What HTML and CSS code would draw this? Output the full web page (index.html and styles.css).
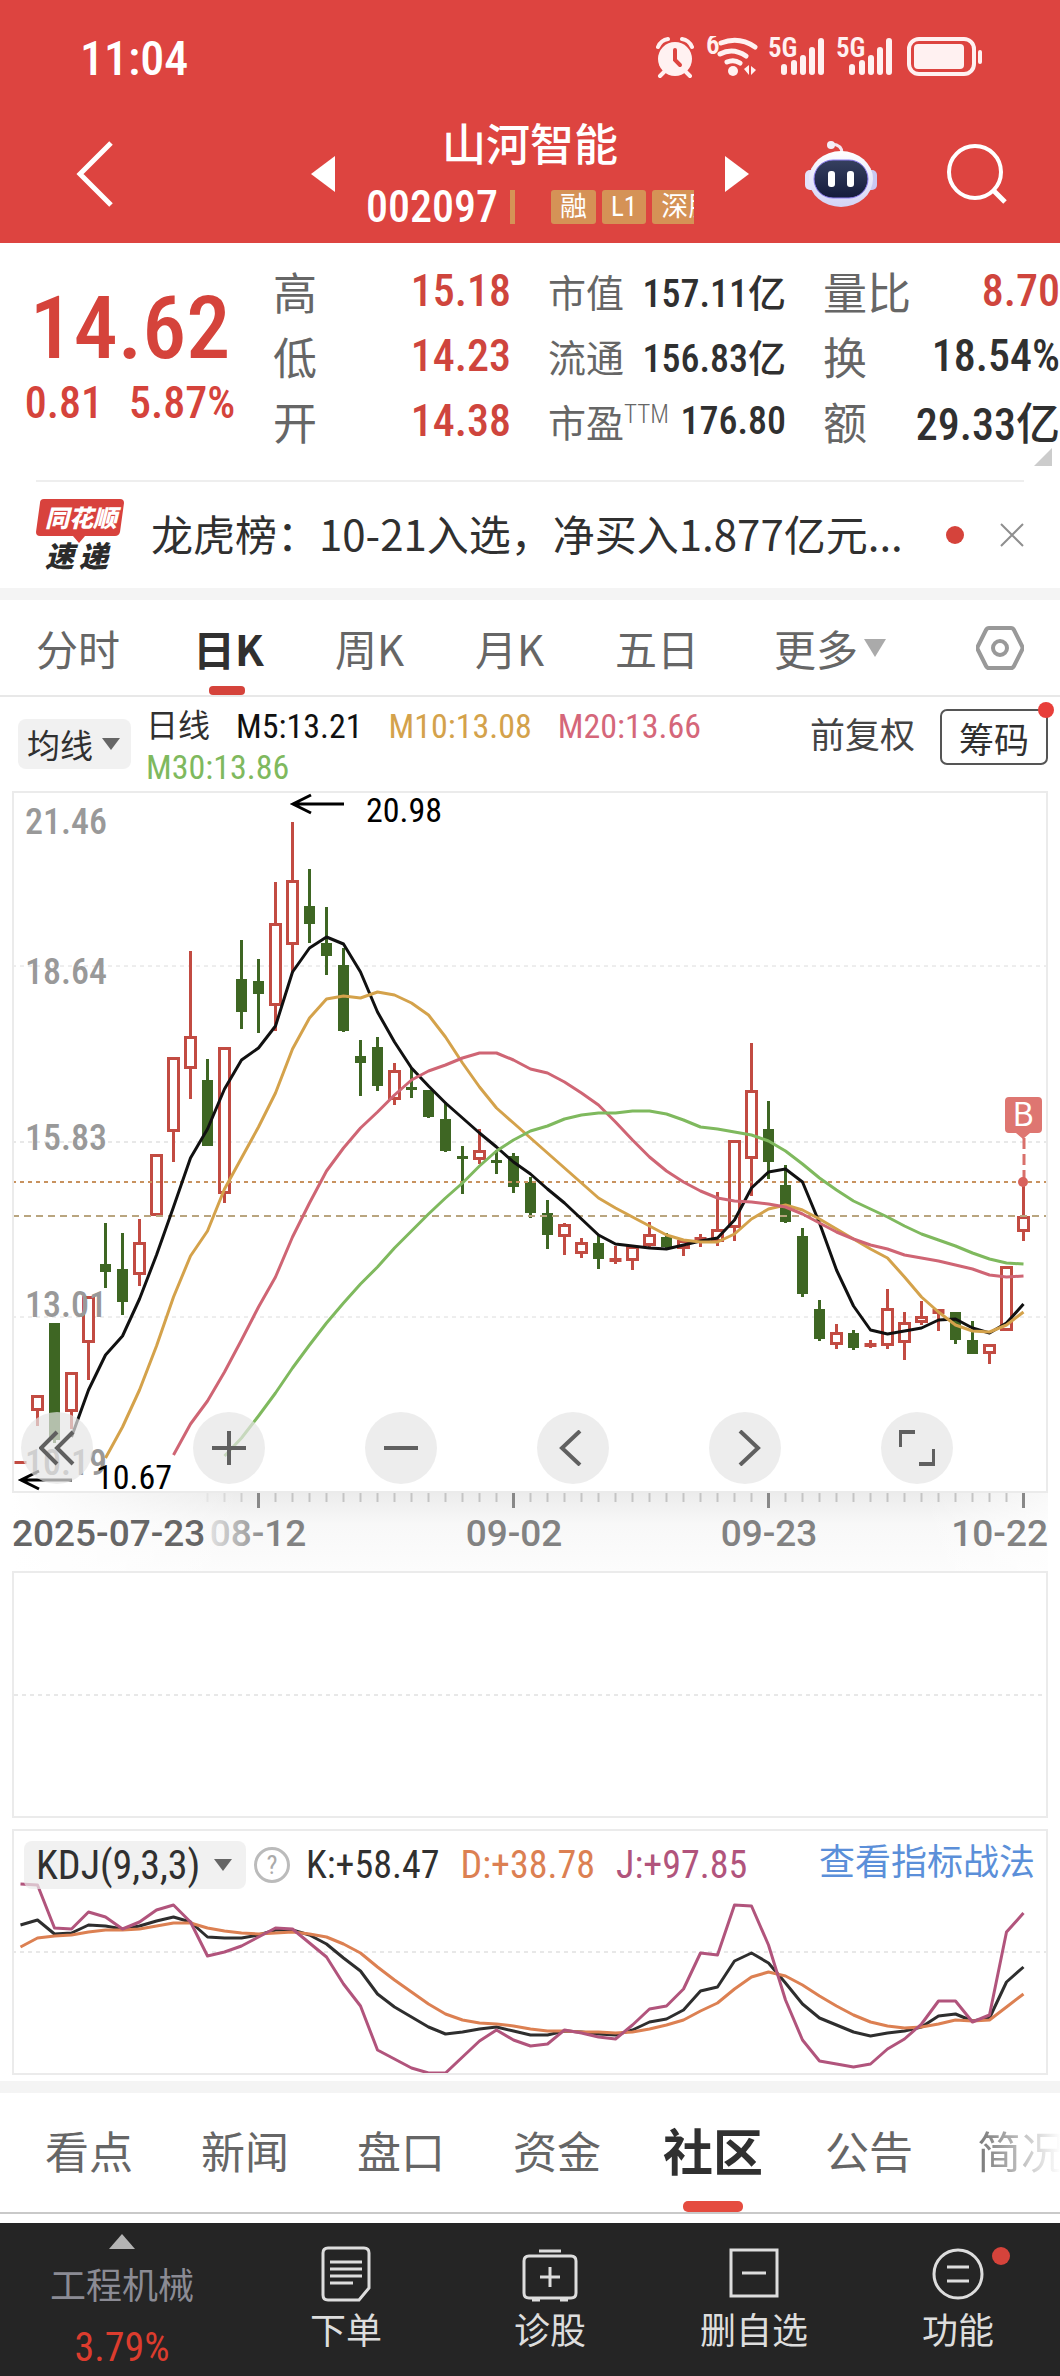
FILE: index.html
```html
<!DOCTYPE html>
<html lang="zh-CN">
<head>
<meta charset="utf-8">
<meta name="viewport" content="width=device-width, initial-scale=1">
<title>山河智能 002097</title>
<link rel="stylesheet" href="styles.css">
</head>
<body>
<header class="top">
  <div class="status">
    <time class="clock">11:04</time>
    <svg class="status-icons" viewBox="0 0 328 44" width="328" height="44" fill="none" stroke="#fff1f1" aria-hidden="true">
      <circle cx="19" cy="23" r="17" fill="#fff1f1" stroke="none"/>
      <path d="M2 11q3-7 10-8M36 11q-3-7-10-8M8 36l-4 4M30 36l4 4" stroke-width="4" stroke-linecap="round"/>
      <path d="M19 14v10l5 5" stroke="#dd4440" stroke-width="4" stroke-linecap="round"/>
      <g stroke-width="5" stroke-linecap="round">
        <path d="M65 7q18-7 34 4M64 18q13-7 26 2M71 26q7-3 13 1"/>
      </g>
      <circle cx="77" cy="35" r="5" fill="#fff1f1" stroke="none"/>
      <path d="M88 33l5-4v10zM95 30v9l5-5z" fill="#fff1f1" stroke="none"/>
      <g stroke-width="6" stroke-linecap="round">
        <path d="M128 31v5M138 27v9M147 22v14M156 14v22M165 5v31"/>
        <path d="M196 31v5M206 27v9M215 22v14M224 14v22M233 5v31"/>
      </g>
      <rect x="253" y="3" width="65" height="35" rx="10" stroke-width="4"/>
      <rect x="258" y="8" width="50" height="25" rx="4" fill="#fff1f1" stroke="none"/>
      <path d="M324 16v10" stroke-width="4" stroke-linecap="round"/>
      <g class="status-text" fill="#fff1f1" stroke="none"><text x="50" y="18">6</text><text x="112" y="21">5G</text><text x="180" y="21">5G</text></g>
    </svg>
  </div>
  <nav class="titlebar" aria-label="个股">
    <button class="icon-btn back" aria-label="返回"><svg viewBox="0 0 40 68" width="40" height="68"><path d="M36 3L5 34l31 31" fill="none" stroke="#fff" stroke-width="5"/></svg></button>
    <button class="icon-btn" aria-label="上一只"><svg viewBox="0 0 24 36" width="24" height="36"><path d="M24 0v36L0 18z" fill="#fff"/></svg></button>
    <div class="stock">
      <h1 class="name">山河智能</h1>
      <div class="code-row"><span class="code">002097</span><i class="bar"></i><span class="tags"><span class="tag">融</span><span class="tag">L1</span><span class="tag">深股通</span></span></div>
    </div>
    <button class="icon-btn" aria-label="下一只"><svg viewBox="0 0 24 36" width="24" height="36"><path d="M0 0v36l24-18z" fill="#fff"/></svg></button>
    <button class="icon-btn robot" aria-label="智能助手">
      <svg viewBox="0 0 72 68" width="72" height="68">
        <defs><linearGradient id="shell" x1="0" y1="0" x2="0" y2="1"><stop offset="0" stop-color="#fff"/><stop offset="1" stop-color="#d3d3f6"/></linearGradient><linearGradient id="visor" x1="0" y1="0" x2="0" y2="1"><stop offset="0" stop-color="#36405f"/><stop offset="1" stop-color="#141b3c"/></linearGradient></defs>
        <path d="M37 13q0-8-10-9" fill="none" stroke="#f4e6f0" stroke-width="3"/><circle cx="26" cy="5" r="4" fill="#f4eef8"/>
        <rect x="0" y="30" width="12" height="20" rx="5" fill="#e4e2fb"/><rect x="60" y="30" width="12" height="20" rx="5" fill="#c9c8f2"/>
        <ellipse cx="36" cy="39" rx="32" ry="28" fill="url(#shell)"/>
        <rect x="9" y="20" width="54" height="38" rx="19" fill="url(#visor)" stroke="#8c7cf0" stroke-width="1"/>
        <rect x="23" y="31" width="7" height="16" rx="3" fill="#fff"/><rect x="42" y="31" width="7" height="16" rx="3" fill="#fff"/>
      </svg>
    </button>
    <button class="icon-btn" aria-label="搜索"><svg viewBox="0 0 62 62" width="62" height="62" fill="none" stroke="#fff" stroke-width="4"><circle cx="29" cy="29" r="26"/><path d="M47 47l12 12" stroke-width="5"/></svg></button>
  </nav>
</header>

<main>
<section class="quote">
  <div class="price"><strong class="last">14.62</strong><div class="change"><span>0.81</span><span>5.87%</span></div></div>
  <dl class="col"><div><dt>高</dt><dd class="up">15.18</dd></div><div><dt>低</dt><dd class="up">14.23</dd></div><div><dt>开</dt><dd class="up">14.38</dd></div></dl>
  <dl class="col small"><div><dt>市值</dt><dd>157.11亿</dd></div><div><dt>流通</dt><dd>156.83亿</dd></div><div><dt>市盈<sup>TTM</sup></dt><dd>176.80</dd></div></dl>
  <dl class="col"><div><dt>量比</dt><dd class="up">8.70</dd></div><div><dt>换</dt><dd>18.54%</dd></div><div><dt>额</dt><dd>29.33亿</dd></div></dl>
  <svg class="corner" viewBox="0 0 18 18" width="18" height="18" aria-hidden="true"><path d="M18 0v18H0z" fill="#ccc"/></svg>
</section>

<section class="news">
  <svg class="news-logo" viewBox="0 0 88 72" width="88" height="72" role="img" aria-label="同花顺速递">
    <path d="M8 0h76q4 0 4 4l-4 29q-1 4-5 4H49l-6 7-6-7H4q-4 0-4-4L4 4q0-4 4-4z" fill="#d8423d"/>
    <text x="9" y="28" fill="#fff" font-size="24">同花顺</text><text x="9" y="68" fill="#2b2b2b" font-size="29">速</text><text x="43" y="68" fill="#2b2b2b" font-size="29">递</text>
  </svg>
  <a class="headline" href="#news">龙虎榜：10-21入选，净买入1.877亿元...</a>
  <i class="dot"></i>
  <button class="icon-btn" aria-label="关闭"><svg viewBox="0 0 24 24" width="24" height="24"><path d="M1 1l22 22M23 1L1 23" stroke="#8f8f8f" stroke-width="2"/></svg></button>
</section>

<nav class="periods" aria-label="周期">
  <button>分时</button><button class="on">日K</button><button>周K</button><button>月K</button><button>五日</button>
  <button class="more">更多<svg viewBox="0 0 22 18" width="22" height="18"><path d="M0 0h22L11 18z" fill="#aaa"/></svg></button>
  <button class="gear" aria-label="设置"><svg viewBox="0 0 48 46" width="48" height="46" fill="none" stroke="#999" stroke-width="4" stroke-linejoin="round"><path d="M13 3h22q2 0 3 2l8 16q1 2 0 4l-8 16q-1 2-3 2H13q-2 0-3-2L2 25q-1-2 0-4l8-16q1-2 3-2z"/><circle cx="24" cy="23" r="7"/></svg></button>
</nav>

<section class="legend">
  <button class="pill">均线<svg viewBox="0 0 18 12" width="18" height="12"><path d="M0 0h18L9 12z" fill="#666"/></svg></button>
  <p class="averages"><span>日线</span><span class="m5">M5:13.21</span><span class="m10">M10:13.08</span><span class="m20">M20:13.66</span><span class="m30">M30:13.86</span></p>
  <button class="plain">前复权</button>
  <button class="chips">筹码<i class="dot"></i></button>
</section>

<section class="panel kline">
  <svg class="plot" id="kline" viewBox="14 793 1032 698" role="img" aria-label="日K线图"></svg>
  <div class="controls">
    <button aria-label="最早"><svg viewBox="0 0 36 36"><path d="M18 2L2 18l16 16M34 2L18 18l16 16"/></svg></button>
    <button aria-label="放大"><svg viewBox="0 0 36 36"><path d="M18 1v34M1 18h34"/></svg></button>
    <button aria-label="缩小"><svg viewBox="0 0 36 36"><path d="M1 18h34"/></svg></button>
    <button aria-label="左移"><svg viewBox="0 0 36 36"><path d="M25 1L7 18l18 17"/></svg></button>
    <button aria-label="右移"><svg viewBox="0 0 36 36"><path d="M13 1l18 17-18 17"/></svg></button>
    <button aria-label="全屏"><svg viewBox="0 0 36 36"><path d="M1 17V2h15M35 19v15H20"/></svg></button>
  </div>
</section>
<div class="axis"><svg id="axis" viewBox="12 1493 1036 78" role="img" aria-label="日期"></svg></div>
<section class="panel volume"></section>
<section class="panel kdj">
  <svg class="plot" id="kdj" viewBox="14 1831 1032 242" role="img" aria-label="KDJ"></svg>
  <div class="kdj-head">
    <button class="pill">KDJ(9,3,3)<svg viewBox="0 0 18 12" width="18" height="12"><path d="M0 0h18L9 12z" fill="#666"/></svg></button>
    <button class="help" aria-label="帮助">?</button>
    <span>K:+58.47</span><span class="d">D:+38.78</span><span class="j">J:+97.85</span>
    <a href="#guide">查看指标战法</a>
  </div>
</section>

<nav class="sections" aria-label="资讯">
  <a href="#kd">看点</a><a href="#xw">新闻</a><a href="#pk">盘口</a><a href="#zj">资金</a><a class="on" href="#sq">社区</a><a href="#gg">公告</a><a class="fade" href="#jk">简况</a>
</nav>
</main>

<nav class="dock" aria-label="操作">
  <button class="sector"><svg viewBox="0 0 26 15" width="26" height="15"><path d="M13 0l13 15H0z" fill="#b4b4b4"/></svg><span>工程机械</span><b>3.79%</b></button>
  <button><svg viewBox="0 0 60 56" width="60" height="56"><path d="M12 2h36q5 0 5 5v35L43 54H12q-5 0-5-5V7q0-5 5-5z"/><path d="M14 16h32M14 23h32M14 30h32M14 37h23"/></svg>下单</button>
  <button><svg viewBox="0 0 60 56" width="60" height="56"><path d="M19 5h22M9 10h42q5 0 5 5v32q0 5-5 5H9q-5 0-5-5V15q0-5 5-5zM30 21v20M20 31h20M12 54h8M40 54h8"/></svg>诊股</button>
  <button><svg viewBox="0 0 60 56" width="60" height="56"><path d="M7 4h46v46H7zM18 27h24"/></svg>删自选</button>
  <button><span class="badge-wrap"><svg viewBox="0 0 60 56" width="60" height="56"><circle cx="30" cy="28" r="24"/><path d="M19 21h22M19 35h22"/></svg><i class="dot"></i></span>功能</button>
</nav>
<script src="chart.js"></script>
</body>
</html>
```
FILE: styles.css
```css
*{box-sizing:border-box}
body{margin:0;background:#fff;color:#303030;font-family:"Roboto Condensed","Noto Sans CJK SC",sans-serif}
h1,p,dl,dd{margin:0}
button{border:0;padding:0;margin:0;background:none;font:inherit;color:inherit;white-space:nowrap}
a{color:inherit;text-decoration:none}
svg{display:block;flex:none}
.dot{display:block;flex:none;width:18px;height:18px;border-radius:50%;background:#d5433b}

.top{height:243px;background:#dd4440;color:#fff}
.status{display:flex;justify-content:space-between;align-items:center;height:116px;padding:0 76px 0 80px}
.clock{font-size:48px;font-weight:500}
.status-text{font-size:27px;font-weight:600}
.titlebar{display:grid;grid-template-columns:311px 24px 1fr 24px 56px 72px 69px 62px 52px;align-items:center;height:108px}
.titlebar>:nth-child(5){grid-column:6}
.titlebar>:nth-child(6){grid-column:8}
.back{padding-left:75px}
.stock{display:flex;flex-direction:column;align-items:center}
.name{font-size:44px;line-height:60px;font-weight:500}
.code-row{display:flex;align-items:center;width:328px;height:56px;padding-top:6px;overflow:hidden}
.code{font-size:44px;font-weight:500}
.bar{width:5px;height:34px;margin:0 36px 0 12px;background:#d59256}
.tags{display:flex;gap:6px;flex:1;overflow:hidden}
.tag{flex:none;padding:0 9px;border-radius:3px;background:#d59256;font-size:27px;line-height:34px}

.quote{position:relative;display:grid;grid-template-columns:212fr 238fr 238fr 237fr;column-gap:37px;height:237px;padding:15px 0 0 24px}
.price{display:flex;flex-direction:column;align-items:center;color:#d5433b}
.last{font-size:88px;line-height:90px;font-weight:500;padding-top:25px}
.change{display:flex;gap:26px;margin-top:5px;font-size:44px;line-height:50px;font-weight:500}
.col div{display:flex;justify-content:space-between;align-items:center;height:65px;font-size:44px;white-space:nowrap}
.col dt{color:#666}
.col dd{font-weight:500}
.col.small div{font-size:38px}
.col sup{font-size:25px;line-height:0;font-weight:300}
.up{color:#cf453d}
.corner{position:absolute;right:8px;bottom:14px}

.news{display:flex;align-items:center;height:108px;margin:0 36px;border-top:2px solid #eee}
.news-logo{margin-right:27px;font-family:"Noto Sans CJK SC",sans-serif;font-weight:900;font-style:italic}
.headline{flex:1;padding-bottom:5px;font:42px/60px "Noto Sans CJK SC",sans-serif;white-space:nowrap}
.news .dot{margin-right:36px}

.periods{display:grid;grid-template-columns:157px 142px 140px 140px 159px 1fr auto;height:109px;border-top:12px solid #f4f4f4;border-bottom:2px solid #e8e8e8;padding:0 36px;font:42px/92px "Noto Sans CJK SC",sans-serif;color:#666}
.periods button{display:flex;align-items:center}
.periods .on{position:relative;font-weight:700;color:#303030}
.periods .on::after{content:"";position:absolute;left:16px;bottom:0;width:36px;height:9px;border-radius:4px;background:#d5433b}
.more svg{margin-left:6px}

.legend{display:flex;align-items:flex-start;height:94px;padding:12px 12px 0 18px;font-size:34px}
.pill{display:flex;align-items:center;justify-content:space-between;gap:9px;height:50px;padding:0 11px 0 9px;border-radius:8px;background:rgba(235,235,235,.7);font-size:33px}
.legend .pill{margin-top:10px}
.averages{flex:1;display:flex;flex-wrap:wrap;column-gap:26px;margin:-3px 0 0 15px;line-height:41px}
.averages span:first-child{font-size:32px}
.m5{color:#111}.m10{color:#d4a24b}.m20{color:#d5677a}.m30{color:#7fb95e}
.plain{font-size:35px;line-height:56px;color:#444}
.chips{position:relative;height:56px;margin-left:25px;padding:0 17px;border:2px solid #555;border-radius:7px;font-size:35px}
.chips .dot{position:absolute;top:-9px;right:-8px;width:16px;height:16px;background:#e83e3a}

.panel{position:relative;margin:0 12px;border:2px solid #ebebeb}
.plot{width:100%;height:auto}
.controls{position:absolute;left:7px;right:93px;bottom:7px;display:flex;justify-content:space-between}
.controls button{display:grid;place-items:center;width:72px;height:72px;border-radius:50%;background:rgba(229,229,229,.7)}
.controls svg{width:36px;height:36px;fill:none;stroke:#606060;stroke-width:4}
.axis{margin:0 12px;background:linear-gradient(90deg,#fff,#fff0 22%,#fff0 88%,#fffa),linear-gradient(#ececec,#f8f8f8 40%,#fcfcfc)}
.axis svg{width:100%;height:auto}
.volume{height:247px;margin-bottom:11px;background:repeating-linear-gradient(90deg,#e8e8e8 0 4px,#fff0 4px 8px) center/100% 2px no-repeat}
.kdj-head{position:absolute;left:10px;right:11px;top:10px;display:flex;align-items:center;height:48px;font-size:38px}
.kdj-head .pill{width:222px;height:48px;padding:0 14px 0 12px;font-size:40px}
.help{width:36px;height:36px;margin:0 16px 0 8px;border:3px solid #bbb;border-radius:50%;color:#aaa;font-size:26px;line-height:30px}
.kdj-head span{margin-right:21px}
.kdj-head .d{color:#dc8052}.kdj-head .j{color:#b1547c}
.kdj-head a{margin-left:auto;font-size:36px;line-height:44px;padding-bottom:4px;color:#5b8fd9}

.sections{display:flex;gap:68px;height:133px;margin-top:6px;padding:0 0 0 45px;border-top:12px solid #f4f4f4;border-bottom:2px solid #c9c9c9;font-size:44px;line-height:122px;color:#666;white-space:nowrap;overflow:hidden}
.sections a{flex:none}
.sections .on{position:relative;margin:0 -6px;font-size:50px;font-weight:700;color:#303030}
.sections .on::after{content:"";position:absolute;left:20px;bottom:0;width:60px;height:11px;border-radius:5px;background:#e54c40}
.sections .fade{margin-left:-4px;background:linear-gradient(90deg,#777,#fff 95%);background-clip:text;-webkit-background-clip:text;color:transparent}

.dock{display:grid;grid-template-columns:244fr 204fr 204fr 204fr 204fr;margin-top:9px;height:153px;background:#252525;color:#ddd;font-size:36px}
.dock button{display:flex;flex-direction:column;align-items:center;padding-top:23px;line-height:54px}
.dock svg{fill:none;stroke:#ddd;stroke-width:3;margin-bottom:3px}
.dock .sector{padding-top:11px;color:#8b8b94}
.dock .sector svg{stroke:none;margin-bottom:11px}
.sector b{font-size:40px;font-weight:400;line-height:56px;padding-top:6px;color:#dc3c2e}
.badge-wrap{position:relative}
.badge-wrap .dot{position:absolute;top:1px;right:-22px}

.halo{fill:none;stroke-linejoin:round}
.chart-label{font-size:36px;font-weight:500;fill:#999}
.mark-label{font-size:34px;fill:#000}
.date-label{font:500 37px Roboto,sans-serif;fill:#828282}
```
FILE: chart.js
```js
const STEP = 17, LEFT = 20.5;
const RED = '#c24b42', GREEN = '#3e6623';
const xOf = i => LEFT + STEP * i;

// Each candle: direction, high, body top, body bottom, low.
const candles = `r 1461 1461 1464 1464|r 1395 1395 1411 1426|g 1323 1323 1440 1443|r 1372 1372 1412 1429|r 1296 1296 1343 1380|g 1223 1264 1272 1288|g 1233 1269 1302 1315|r 1219 1242 1275 1286|r 1154 1154 1216 1216|r 1057 1057 1132 1162|r 951 1036 1069 1099|g 1059 1080 1146 1146|r 1047 1047 1194 1203|g 940 979 1012 1029|g 959 981 994 1033|r 882 923 1006 1031|r 822 880 945 973|g 869 906 924 943|g 907 943 956 975|g 948 965 1031 1032|g 1040 1056 1063 1096|g 1037 1047 1086 1091|r 1063 1070 1100 1105|g 1068 1087 1090 1098|g 1090 1090 1117 1118|g 1102 1119 1151 1152|g 1146 1156 1159 1194|r 1129 1150 1160 1164|g 1150 1160 1163 1174|g 1153 1156 1187 1193|g 1177 1182 1213 1218|g 1200 1213 1235 1249|r 1223 1224 1237 1255|r 1238 1242 1254 1258|g 1235 1243 1259 1269|r 1246 1258 1262 1264|r 1246 1246 1261 1270|r 1222 1234 1246 1247|g 1233 1237 1247 1248|r 1240 1240 1249 1256|r 1234 1237 1241 1247|r 1192 1229 1242 1246|r 1140 1140 1228 1241|r 1043 1090 1159 1196|g 1101 1129 1162 1179|g 1165 1185 1222 1223|g 1228 1236 1294 1297|g 1300 1309 1339 1341|r 1324 1332 1345 1349|g 1330 1333 1348 1350|r 1340 1343 1347 1348|r 1289 1308 1346 1349|r 1312 1322 1343 1360|r 1301 1316 1323 1325|r 1309 1309 1314 1331|g 1312 1312 1340 1344|g 1321 1340 1354 1354|r 1344 1344 1354 1364|r 1266 1266 1331 1331|r 1182 1216 1232 1241`
  .split('|').map(row => row.split(' ')).map(([dir, ...v]) => ({ dir, v: v.map(Number) }));

const candleSvg = candles.map(({ dir, v: [high, top, bottom, low] }, i) => {
  const x = xOf(i), color = dir === 'r' ? RED : GREEN;
  if (dir === 'g') {
    return `<path d="M${x} ${high}V${low}" stroke="${color}" stroke-width="3"/><path d="M${x} ${top}V${bottom}" stroke="${color}" stroke-width="11"/>`;
  }
  const body = bottom - top > 6
    ? `<path d="M${x - 5} ${top + 1.5}h10V${bottom - 1.5}h-10z" fill="#fff" stroke="${color}" stroke-width="3"/>`
    : `<path d="M${x} ${top}V${bottom}" stroke="${color}" stroke-width="12"/>`;
  return `<path d="M${x} ${high}V${low}" stroke="${color}" stroke-width="3"/>${body}`;
}).join('');

const line = (start, ys, color, width = 3) =>
  `<polyline class="halo" stroke="${color}" stroke-width="${width}" points="${ys.map((y, i) => xOf(start + i) + ',' + y).join(' ')}"/>`;

const m5 = [1437,1390,1355,1336,1299,1255,1207,1158,1129,1089,1060,1048,1026,972,948,937,944,972,1012,1042,1068,1086,1103,1118,1133,1147,1162,1174,1189,1203,1219,1235,1244,1246,1248,1249,1245,1241,1238,1220,1188,1172,1169,1182,1223,1270,1306,1330,1334,1331,1328,1320,1319,1328,1333,1323,1304];
const m10 = [1458,1427,1390,1346,1297,1256,1231,1189,1158,1127,1093,1049,1018,999,996,998,992,995,1003,1015,1037,1063,1087,1108,1123,1138,1153,1168,1183,1198,1208,1217,1226,1235,1240,1242,1242,1234,1219,1209,1205,1210,1219,1229,1239,1249,1258,1277,1297,1312,1325,1331,1332,1325,1312];
const m20 = [1455,1424,1401,1372,1340,1307,1277,1237,1203,1171,1148,1128,1112,1095,1080,1071,1065,1058,1053,1053,1060,1069,1073,1082,1093,1105,1122,1140,1157,1171,1182,1191,1198,1201,1202,1204,1207,1214,1223,1232,1239,1245,1249,1255,1258,1261,1265,1269,1275,1277,1276];
const m30 = [1456,1438,1416,1393,1368,1345,1323,1303,1284,1267,1248,1231,1214,1198,1183,1166,1151,1140,1131,1126,1119,1115,1113,1113,1111,1111,1114,1120,1127,1129,1132,1135,1141,1151,1164,1178,1190,1201,1209,1217,1226,1234,1240,1246,1253,1259,1263,1264];

const dashed = (y, color, dash, width = 2) =>
  `<path d="M12 ${y}H1048" stroke="${color}" stroke-width="${width}" stroke-dasharray="${dash}"/>`;
const label = (x, y, text, cls = 'chart-label') => `<text class="${cls}" x="${x}" y="${y}">${text}</text>`;

document.getElementById('kline').innerHTML =
  dashed(966, '#dcdcdc', '4 4', 1) + dashed(1142, '#e8e8e8', '4 4') + dashed(1317, '#dcdcdc', '4 4', 1) +
  candleSvg +
  dashed(1182, '#c8925f', '4 4') + dashed(1216, '#b9a57f', '7 5') +
  label(25, 834, '21.46') + label(25, 984, '18.64') + label(25, 1150, '15.83') + label(25, 1317, '13.01') + label(25, 1475, '10.19') +
  line(3, m5, '#111') + line(5, m10, '#d4a24b') + line(9, m20, '#cf6574') + line(12, m30, '#7fb95e') +
  '<path d="M344 804H293M311 795l-18 9 18 9M72 1480H21M39 1471l-18 9 18 9" fill="none" stroke="#000" stroke-width="3"/>' +
  label(366, 822, '20.98', 'mark-label') + label(96, 1489, '10.67', 'mark-label') +
  '<path d="M1024 1138V1182" stroke="#d9706b" stroke-width="3" stroke-dasharray="11 5"/><circle cx="1023" cy="1182" r="5" fill="#d8625c"/>' +
  '<path d="M1009 1097h29q4 0 4 4v28q0 4-4 4h-8l-7 6-7-6h-7q-4 0-4-4v-28q0-4 4-4z" fill="#de7671"/>' +
  '<text x="1023" y="1126" font-size="32" font-family="Noto Sans CJK SC" text-anchor="middle" fill="#fff">B</text>';

let ticks = '';
for (let i = 11; i < 60; i++) {
  const major = i % 15 === 14;
  ticks += `<path d="M${xOf(i)} 1493v${major ? 15 : 9}" stroke="${major ? '#888' : '#c4c4c4'}" stroke-width="${major ? 3 : 2}" opacity="${Math.min(1, (i - 10) / 4)}"/>`;
}
document.getElementById('axis').innerHTML =
  '<defs><linearGradient id="fade" x1="208" x2="270" gradientUnits="userSpaceOnUse"><stop offset="0" stop-color="#e4e4e4"/><stop offset="1" stop-color="#828282"/></linearGradient></defs>' +
  ticks +
  '<text class="date-label" x="12" y="1546" style="fill:#666">2025-07-23</text>' +
  '<text class="date-label" x="258" y="1546" text-anchor="middle" style="fill:url(#fade)">08-12</text>' +
  '<text class="date-label" x="514" y="1546" text-anchor="middle">09-02</text>' +
  '<text class="date-label" x="769" y="1546" text-anchor="middle">09-23</text>' +
  '<text class="date-label" x="1048" y="1546" text-anchor="end">10-22</text>';

const k = [1925,1920,1934,1933,1925,1926,1929,1926,1921,1917,1922,1937,1938,1938,1935,1930,1930,1935,1944,1958,1971,1994,2007,2017,2027,2034,2032,2029,2027,2031,2035,2035,2031,2032,2034,2035,2030,2022,2019,2010,1991,1987,1961,1953,1963,1983,2004,2018,2025,2032,2036,2033,2031,2027,2016,2014,2021,2018,1982,1967];
const d = [1947,1938,1936,1935,1932,1930,1930,1929,1926,1923,1923,1928,1931,1933,1934,1933,1932,1934,1937,1944,1953,1967,1980,1992,2004,2014,2020,2023,2024,2026,2029,2031,2031,2032,2032,2033,2032,2029,2025,2020,2011,2003,1989,1977,1972,1976,1985,1996,2006,2015,2022,2026,2028,2027,2024,2020,2021,2020,2007,1994];
const j = [1884,1885,1928,1929,1912,1917,1929,1922,1910,1905,1922,1956,1952,1946,1937,1928,1929,1943,1957,1984,2006,2050,2059,2068,2073,2073,2057,2041,2030,2040,2046,2044,2030,2033,2037,2039,2025,2009,2006,1989,1953,1955,1905,1906,1945,2000,2040,2061,2064,2067,2064,2049,2039,2024,2001,2001,2022,2015,1932,1913];
document.getElementById('kdj').innerHTML =
  dashed(1952, '#e8e8e8', '4 4') + line(0, k, '#2e2e2e') + line(0, d, '#dc8052') + line(0, j, '#b1547c');
```
